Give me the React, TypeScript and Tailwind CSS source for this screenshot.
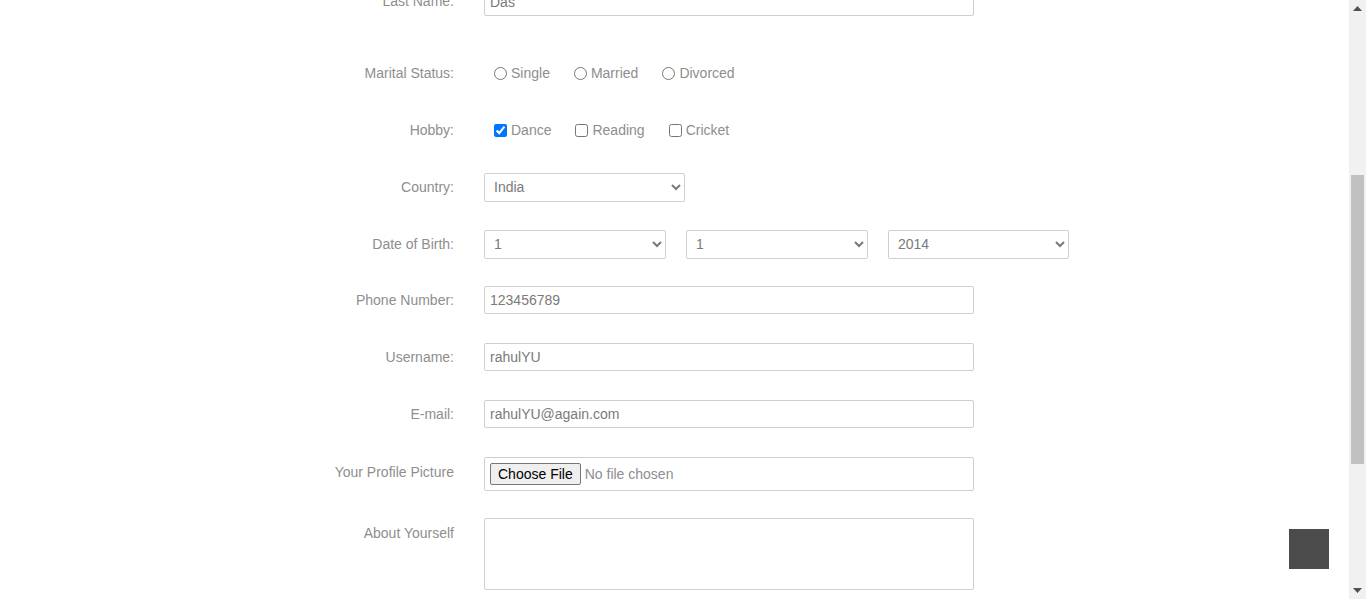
import React from "react";

const label = "w-[150px] shrink-0 text-right text-[14px] text-[#8e8e8e]";
const field =
  "h-[28px] w-[490px] rounded-[2px] border border-[#cfcfcf] bg-white px-[5px] text-[14px] text-[#7a7a7a] outline-none";
const select =
  "h-[29px] rounded-[2px] border border-[#cfcfcf] bg-white px-[5px] text-[14px] text-[#7a7a7a] outline-none";

function Row({ name, children, className = "" }: { name: string; children: React.ReactNode; className?: string }) {
  return (
    <div className={`flex items-center gap-[30px] ${className}`}>
      <label className={label}>{name}</label>
      {children}
    </div>
  );
}

export default function App() {
  return (
    <div className="flex h-[599px] w-[1366px] overflow-hidden bg-white font-['Liberation_Sans',Arial,sans-serif]">
      <main className="relative h-full flex-1 overflow-hidden">
        <form className="-mt-[13px] pl-[304px]">
          {/* Last name */}
          <Row name="Last Name:" className="h-[29px]">
            <input className={field} defaultValue="Das" />
          </Row>

          {/* Marital status */}
          <Row name="Marital Status:" className="mt-[43px] h-[28px]">
            <div className="flex items-center pl-[10px] text-[14px] text-[#8e8e8e]">
              <label className="flex items-center gap-[4px]">
                <input type="radio" name="ms" className="m-0 h-[13px] w-[13px]" />
                Single
              </label>
              <label className="ml-[24px] flex items-center gap-[4px]">
                <input type="radio" name="ms" className="m-0 h-[13px] w-[13px]" />
                Married
              </label>
              <label className="ml-[24px] flex items-center gap-[4px]">
                <input type="radio" name="ms" className="m-0 h-[13px] w-[13px]" />
                Divorced
              </label>
            </div>
          </Row>

          {/* Hobby */}
          <Row name="Hobby:" className="mt-[29px] h-[28px]">
            <div className="flex items-center pl-[10px] text-[14px] text-[#8e8e8e]">
              <label className="flex items-center gap-[4px]">
                <input type="checkbox" defaultChecked className="m-0 h-[13px] w-[13px]" />
                Dance
              </label>
              <label className="ml-[24px] flex items-center gap-[4px]">
                <input type="checkbox" className="m-0 h-[13px] w-[13px]" />
                Reading
              </label>
              <label className="ml-[24px] flex items-center gap-[4px]">
                <input type="checkbox" className="m-0 h-[13px] w-[13px]" />
                Cricket
              </label>
            </div>
          </Row>

          {/* Country */}
          <Row name="Country:" className="mt-[29px] h-[28px]">
            <select className={`${select} w-[201px]`} defaultValue="India">
              <option>India</option>
              <option>USA</option>
              <option>UK</option>
            </select>
          </Row>

          {/* Date of birth */}
          <Row name="Date of Birth:" className="mt-[29px] h-[28px]">
            <div className="flex gap-[20px]">
              <select className={`${select} w-[182px]`}>
                <option>1</option>
                <option>2</option>
              </select>
              <select className={`${select} w-[182px]`}>
                <option>1</option>
                <option>2</option>
              </select>
              <select className={`${select} w-[181px]`}>
                <option>2014</option>
                <option>2015</option>
              </select>
            </div>
          </Row>

          <Row name="Phone Number:" className="mt-[28px] h-[28px]">
            <input className={field} defaultValue="123456789" />
          </Row>

          <Row name="Username:" className="mt-[29px] h-[28px]">
            <input className={field} defaultValue="rahulYU" />
          </Row>

          <Row name="E-mail:" className="mt-[29px] h-[28px]">
            <input className={field} defaultValue="rahulYU@again.com" />
          </Row>

          {/* Profile picture */}
          <div className="mt-[29px] flex items-start gap-[30px]">
            <label className={`${label} pt-[5px]`}>Your Profile Picture</label>
            <input
              type="file"
              className="h-[34px] w-[490px] rounded-[2px] border border-[#cfcfcf] bg-white px-[5px] py-[5px] text-[14px] text-[#8e8e8e] file:mr-[4px] file:h-[22px] file:rounded-[2px] file:border file:border-solid file:border-[#767676] file:bg-[#efefef] file:px-[7px] file:text-[14px] file:text-black"
            />
          </div>

          {/* About */}
          <div className="mt-[27px] flex items-start gap-[30px]">
            <label className={`${label} pt-[5px]`}>About Yourself</label>
            <textarea className="h-[72px] w-[490px] resize-none rounded-[2px] border border-[#cfcfcf] bg-white px-[5px] text-[14px] text-[#7a7a7a] outline-none" />
          </div>
        </form>

        {/* back-to-top button */}
        <button className="absolute left-[1289px] top-[529px] h-[40px] w-[40px] bg-[#4b4b4b]" aria-label="Back to top" />
      </main>

      {/* scrollbar */}
      <div className="flex h-full w-[17px] flex-col items-center bg-[#f1f1f1]">
        <div className="flex h-[17px] w-full items-center justify-center">
          <svg width="9" height="5" viewBox="0 0 9 5">
            <path d="M0 5 L4.5 0 L9 5 Z" fill="#505050" />
          </svg>
        </div>
        <div className="mt-[158px] h-[289px] w-[13px] bg-[#c1c1c1]" />
        <div className="flex-1" />
        <div className="flex h-[17px] w-full items-center justify-center">
          <svg width="9" height="5" viewBox="0 0 9 5">
            <path d="M0 0 L9 0 L4.5 5 Z" fill="#505050" />
          </svg>
        </div>
      </div>
    </div>
  );
}
